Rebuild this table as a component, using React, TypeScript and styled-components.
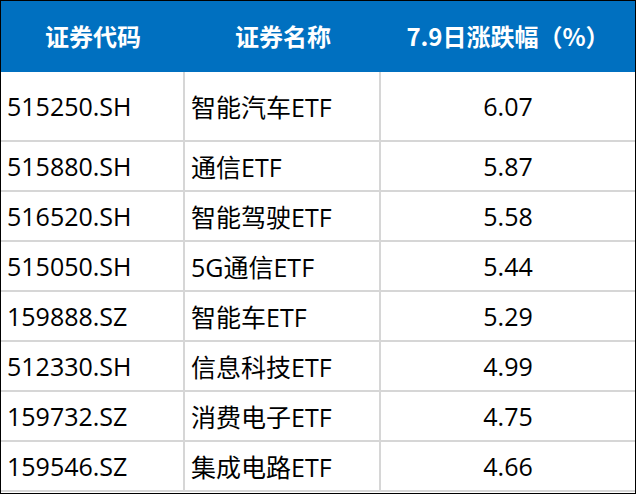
import React from "react";
import styled, { createGlobalStyle } from "styled-components";

const Global = createGlobalStyle`
  html, body { margin: 0; padding: 0; background: #fff; }
  body { font-family: "Open Sans", "Noto Sans CJK SC", sans-serif; }
`;

const Table = styled.div`
  box-sizing: border-box;
  width: 636px;
  height: 494px;
  border: 1px solid #000;
  display: flex;
  flex-direction: column;
  background: #fff;
`;

const Header = styled.div`
  display: grid;
  grid-template-columns: 184px 196px 1fr;
  height: 71px;
  background: #0070c0;
  color: #fff;
  font-family: "Noto Sans CJK SC", sans-serif;
  font-weight: 700;
  font-size: 24px;
`;

const HeadCell = styled.div`
  display: flex;
  align-items: center;
  justify-content: center;
  padding-bottom: 2px;
`;

const Row = styled.div<{ $h: number }>`
  box-sizing: border-box;
  display: grid;
  grid-template-columns: 184px 196px 1fr;
  height: ${(p) => p.$h}px;
  border-bottom: 2px solid #d6d6d6;
  font-size: 25px;
  color: #000;
`;

const Cell = styled.div<{ $align?: "left" | "center"; $divider?: boolean }>`
  box-sizing: border-box;
  display: flex;
  align-items: center;
  justify-content: ${(p) => (p.$align === "center" ? "center" : "flex-start")};
  padding-left: ${(p) => (p.$align === "center" ? "0" : "6px")};
  border-right: ${(p) => (p.$divider ? "2px solid #d6d6d6" : "none")};
  white-space: nowrap;
`;

const data = [
  ["515250.SH", "智能汽车ETF", "6.07"],
  ["515880.SH", "通信ETF", "5.87"],
  ["516520.SH", "智能驾驶ETF", "5.58"],
  ["515050.SH", "5G通信ETF", "5.44"],
  ["159888.SZ", "智能车ETF", "5.29"],
  ["512330.SH", "信息科技ETF", "4.99"],
  ["159732.SZ", "消费电子ETF", "4.75"],
  ["159546.SZ", "集成电路ETF", "4.66"],
];

export default function App() {
  return (
    <>
      <Global />
      <Table>
        <Header>
          <HeadCell>证券代码</HeadCell>
          <HeadCell>证券名称</HeadCell>
          <HeadCell>7.9日涨跌幅（%）</HeadCell>
        </Header>
        {data.map((r, i) => (
          <Row key={r[0]} $h={i === 0 ? 70 : 50}>
            <Cell $divider>{r[0]}</Cell>
            <Cell $divider>{r[1]}</Cell>
            <Cell $align="center">{r[2]}</Cell>
          </Row>
        ))}
      </Table>
    </>
  );
}
